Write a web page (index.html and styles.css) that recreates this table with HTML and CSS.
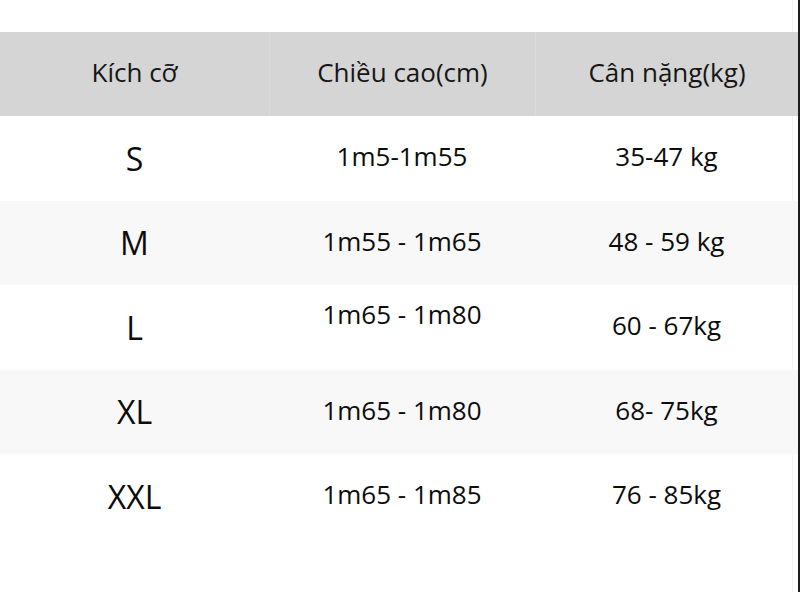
FILE: index.html
```html
<!DOCTYPE html>
<html lang="vi">
<head>
<meta charset="utf-8">
<title>Bảng kích cỡ</title>
<link rel="stylesheet" href="styles.css">
</head>
<body>
<div class="page">
  <div class="size-table">
    <div class="row head">
      <div class="cell">Kích cỡ</div>
      <div class="cell">Chiều cao(cm)</div>
      <div class="cell">Cân nặng(kg)</div>
    </div>
    <div class="row">
      <div class="cell size">S</div>
      <div class="cell">1m5-1m55</div>
      <div class="cell">35-47 kg</div>
    </div>
    <div class="row alt short">
      <div class="cell size">M</div>
      <div class="cell">1m55 - 1m65</div>
      <div class="cell">48 - 59 kg</div>
    </div>
    <div class="row">
      <div class="cell size">L</div>
      <div class="cell raised">1m65 - 1m80</div>
      <div class="cell">60 - 67kg</div>
    </div>
    <div class="row alt short">
      <div class="cell size">XL</div>
      <div class="cell">1m65 - 1m80</div>
      <div class="cell">68- 75kg</div>
    </div>
    <div class="row">
      <div class="cell size">XXL</div>
      <div class="cell">1m65 - 1m85</div>
      <div class="cell">76 - 85kg</div>
    </div>
  </div>
</div>
</body>
</html>
```
FILE: styles.css
```css
html, body {
  margin: 0;
  padding: 0;
  background: #ffffff;
}

.page {
  width: 800px;
  height: 592px;
  border-right: 2px solid #1e1e1e;
  padding-top: 32px;
  box-sizing: border-box;
  overflow: hidden;
  font-family: "Open Sans", "Noto Sans", sans-serif;
  color: #0c0c0c;
  background: linear-gradient(to right, transparent 792px, #f3f3f3 792px, #f3f3f3 793px, transparent 793px);
}

.size-table {
  display: flex;
  flex-direction: column;
}

.row {
  display: grid;
  grid-template-columns: 269px 266px 1fr;
  height: 85px;
}

.row.short {
  height: 84px;
}

.row.head {
  height: 84px;
  background: #d5d5d5;
  color: #161616;
}

.row.head .cell {
  padding-bottom: 4px;
}

.row.head .cell + .cell {
  border-left: 1px solid #dbdbdb;
}

.row.alt {
  background: #f8f8f8;
}

.cell {
  display: flex;
  align-items: center;
  justify-content: center;
  font-size: 26px;
  line-height: 1;
  padding-bottom: 5px;
  box-sizing: border-box;
}

.cell.size {
  font-size: 32px;
  padding-bottom: 0;
}

.cell.raised {
  padding-bottom: 27px;
}
```
